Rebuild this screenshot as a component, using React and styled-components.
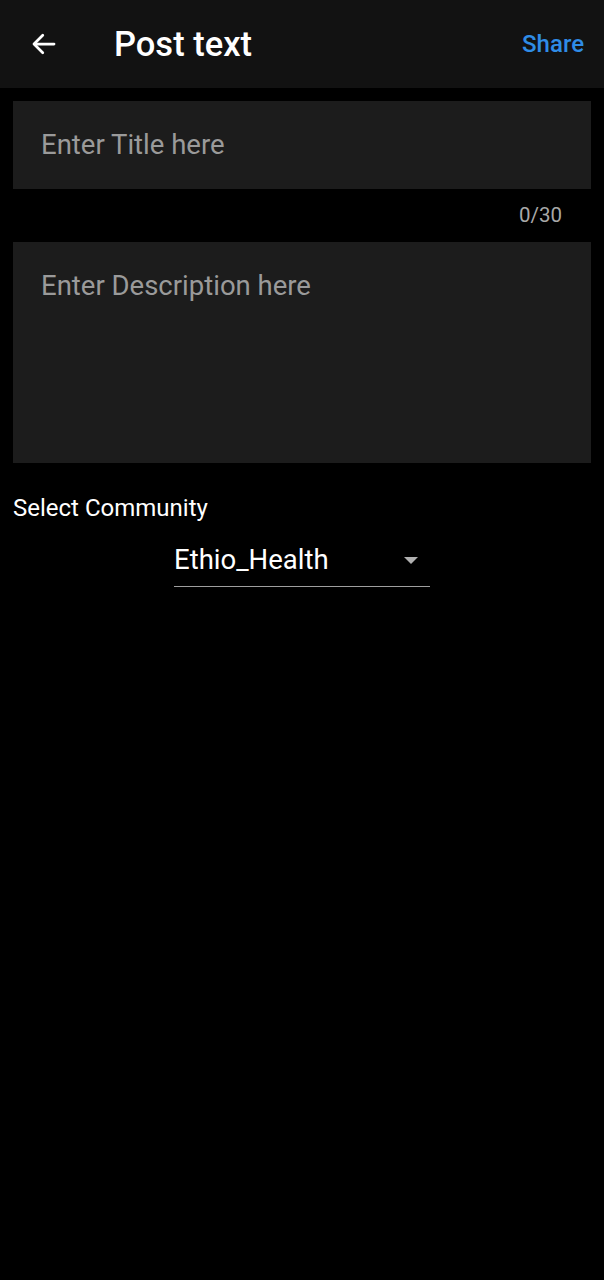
import styled, {createGlobalStyle} from "styled-components";

const GlobalStyle = createGlobalStyle`
  html, body {
    margin: 0;
    padding: 0;
    background: #000;
    font-family: Roboto, "Noto Sans", sans-serif;
  }
`

const Page = styled.div`
  width: 604px;
  min-height: 1280px;
  background: #000;
  color: #fff;
`

const Header = styled.header`
  height: 88px;
  background: #121212;
  display: flex;
  align-items: center;
  padding: 0 20px 0 28px;
  box-sizing: border-box;
`

const BackButton = styled.button`
  background: none;
  border: 0;
  padding: 0;
  width: 32px;
  height: 32px;
  display: flex;
  align-items: center;
  justify-content: center;
  color: #fff;
  cursor: pointer;
`

const Title = styled.h1`
  margin: 0 0 0 54px;
  font-size: 34.5px;
  font-weight: 500;
  flex: 1;
`

const ShareButton = styled.button`
  background: none;
  border: 0;
  padding: 0;
  color: #2f8ce6;
  font-family: inherit;
  font-size: 24px;
  font-weight: 500;
  cursor: pointer;
`

const Form = styled.div`
  padding: 13px 13px 0;
  display: flex;
  flex-direction: column;
`

const Field = styled.div`
  background: #1c1c1c;
  height: ${p => p.$height}px;
  padding: ${p => p.$top}px 28px 0;
  box-sizing: border-box;
  color: #9a9a9a;
  font-size: 27.5px;
`

const Counter = styled.div`
  text-align: right;
  color: #a8a8a8;
  font-size: 20.5px;
  padding: 14px 29px 0 0;
  height: 53px;
  box-sizing: border-box;
`

const Label = styled.div`
  margin-top: 31px;
  font-size: 24px;
  color: #fff;
`

const DropdownRow = styled.div`
  display: flex;
  justify-content: center;
  margin-top: 21px;
`

const Dropdown = styled.div`
  width: 256px;
  display: flex;
  align-items: center;
  justify-content: space-between;
  border-bottom: 1px solid #9e9e9e;
  padding: 0 12px 10px 0;
  box-sizing: border-box;
  font-size: 27.5px;
`

const Caret = styled.span`
  width: 0;
  height: 0;
  border-left: 7px solid transparent;
  border-right: 7px solid transparent;
  border-top: 7px solid #b0b0b0;
  margin-top: 2px;
`

export default function App() {
    return (
        <Page>
            <GlobalStyle/>
            <Header>
                <BackButton aria-label="Back">
                    <svg width="30" height="30" viewBox="0 0 24 24" fill="none" stroke="#fff" strokeWidth="2.2"
                         strokeLinecap="round" strokeLinejoin="round">
                        <path d="M20 12H4.5"/>
                        <path d="M11 5l-7 7 7 7"/>
                    </svg>
                </BackButton>
                <Title>Post text</Title>
                <ShareButton>Share</ShareButton>
            </Header>
            <Form>
                <Field $height={88} $top={27}>Enter Title here</Field>
                <Counter>0/30</Counter>
                <Field $height={221} $top={27}>Enter Description here</Field>
                <Label>Select Community</Label>
                <DropdownRow>
                    <Dropdown>
                        <span>Ethio_Health</span>
                        <Caret/>
                    </Dropdown>
                </DropdownRow>
            </Form>
        </Page>
    )
}
